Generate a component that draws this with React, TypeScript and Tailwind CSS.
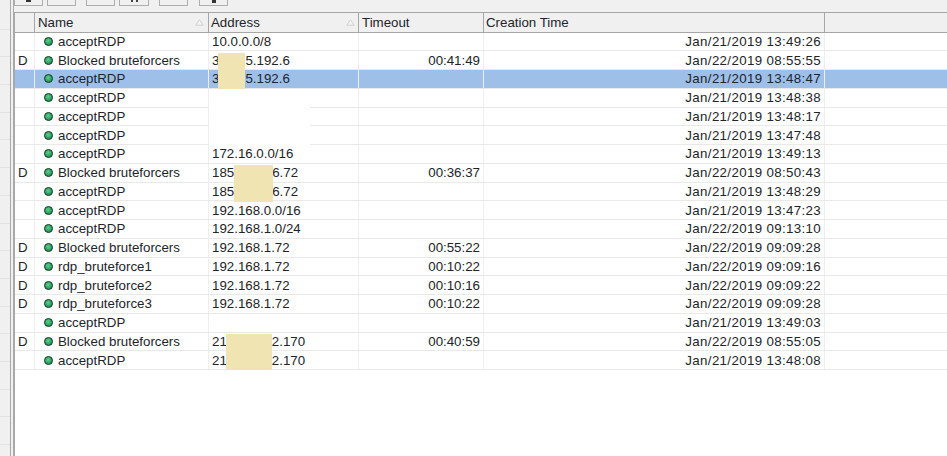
import React from 'react';

type Row = {
  flag?: string;
  name: string;
  addr?: string;
  tail?: string;
  gap?: number;
  timeout?: string;
  created: string;
  selected?: boolean;
};

const rows: Row[] = [
  { name: 'acceptRDP', addr: '10.0.0.0/8', created: 'Jan/21/2019 13:49:26' },
  { flag: 'D', name: 'Blocked bruteforcers', addr: '3', tail: '5.192.6', gap: 26, timeout: '00:41:49', created: 'Jan/22/2019 08:55:55' },
  { name: 'acceptRDP', addr: '3', tail: '5.192.6', gap: 26, created: 'Jan/21/2019 13:48:47', selected: true },
  { name: 'acceptRDP', created: 'Jan/21/2019 13:48:38' },
  { name: 'acceptRDP', created: 'Jan/21/2019 13:48:17' },
  { name: 'acceptRDP', created: 'Jan/21/2019 13:47:48' },
  { name: 'acceptRDP', addr: '172.16.0.0/16', created: 'Jan/21/2019 13:49:13' },
  { flag: 'D', name: 'Blocked bruteforcers', addr: '185', tail: '6.72', gap: 38, timeout: '00:36:37', created: 'Jan/22/2019 08:50:43' },
  { name: 'acceptRDP', addr: '185', tail: '6.72', gap: 38, created: 'Jan/21/2019 13:48:29' },
  { name: 'acceptRDP', addr: '192.168.0.0/16', created: 'Jan/21/2019 13:47:23' },
  { name: 'acceptRDP', addr: '192.168.1.0/24', created: 'Jan/22/2019 09:13:10' },
  { flag: 'D', name: 'Blocked bruteforcers', addr: '192.168.1.72', timeout: '00:55:22', created: 'Jan/22/2019 09:09:28' },
  { flag: 'D', name: 'rdp_bruteforce1', addr: '192.168.1.72', timeout: '00:10:22', created: 'Jan/22/2019 09:09:16' },
  { flag: 'D', name: 'rdp_bruteforce2', addr: '192.168.1.72', timeout: '00:10:16', created: 'Jan/22/2019 09:09:22' },
  { flag: 'D', name: 'rdp_bruteforce3', addr: '192.168.1.72', timeout: '00:10:22', created: 'Jan/22/2019 09:09:28' },
  { name: 'acceptRDP', created: 'Jan/21/2019 13:49:03' },
  { flag: 'D', name: 'Blocked bruteforcers', addr: '21', tail: '2.170', gap: 45, timeout: '00:40:59', created: 'Jan/22/2019 08:55:05' },
  { name: 'acceptRDP', addr: '21', tail: '2.170', gap: 45, created: 'Jan/21/2019 13:48:08' },
];

const toolButtons = ['w-[29px]', 'w-[29px] ml-[4px]', 'w-[29px] ml-[10px]', 'w-[30px] ml-[4px]', 'w-[29px] ml-[10px]', 'w-[29px] ml-[11px]'];

function Dot() {
  return (
    <svg width="9" height="9" viewBox="0 0 9 9" className="shrink-0">
      <defs>
        <radialGradient id="dot" cx="45%" cy="40%" r="60%">
          <stop offset="0%" stopColor="#5fd08e" />
          <stop offset="100%" stopColor="#1b8a50" />
        </radialGradient>
      </defs>
      <circle cx="4.5" cy="4.5" r="4" fill="url(#dot)" stroke="#12402a" strokeWidth="1" />
    </svg>
  );
}

function SortMark() {
  return (
    <svg width="9" height="7" viewBox="0 0 9 7" className="shrink-0">
      <path d="M4.5 0.8 L8.2 6.2 L0.8 6.2 Z" fill="#f4f4f4" stroke="#cfcfcf" strokeWidth="1" />
    </svg>
  );
}

export default function App() {
  return (
    <div className="w-[947px] h-[456px] overflow-hidden flex bg-[#f0f0f0] text-[13.3px] text-[#22242a] font-['Liberation_Sans',Arial,sans-serif]">
      {/* Left edge with faint ruler ticks */}
      <div className="w-[10px] shrink-0 pt-[2px]">
        {Array.from({ length: 16 }).map((_, i) => (
          <div key={i} className="h-[27.7px] border-b border-[#e2e2e2]" />
        ))}
      </div>
      <div className="w-[4px] shrink-0 border-l border-r border-[#a9a9a9] bg-[#f0f0f0]" />

      <div className="flex-1 flex flex-col min-w-0">
        {/* Toolbar remains */}
        <div className="h-[11.5px] shrink-0 flex items-start">
          {toolButtons.map((w, i) => (
            <div key={i} className={`${w} h-[6px] border-l border-r border-b border-[#adadad] bg-[#f0f0f0] flex justify-center`}>
              {i === 0 && <div className="w-[5px] h-[2px] bg-[#333]" />}
              {i === 3 && <div className="w-[7px] h-[2px] border-l-2 border-r-2 border-[#444]" />}
              {i === 5 && <div className="w-[4px] h-[3px] bg-[#333]" />}
            </div>
          ))}
        </div>

        <div className="flex-1 flex flex-col relative border-l border-[#a9a9a9]">
          {/* Column header */}
          <div className="h-[21px] shrink-0 flex bg-[#f0f0f0] border-t border-b border-[#a6a6a6]">
            <div className="w-[20px] shrink-0 border-r border-[#a6a6a6]" />
            <div className="w-[174px] shrink-0 border-r border-[#a6a6a6] pl-[3px] pr-[4px] flex items-center justify-between">
              <span className="pt-px">Name</span>
              <SortMark />
            </div>
            <div className="w-[150px] shrink-0 border-r border-[#a6a6a6] pl-[2px] pr-[3px] flex items-center justify-between">
              <span className="pt-px">Address</span>
              <SortMark />
            </div>
            <div className="w-[125px] shrink-0 border-r border-[#a6a6a6] pl-[3px] pt-px flex items-center">Timeout</div>
            <div className="w-[341px] shrink-0 border-r border-[#a6a6a6] pl-[2px] pt-px flex items-center">Creation Time</div>
          </div>

          {/* Rows */}
          <div className="flex-1 bg-white">
            {rows.map((r, i) => (
              <div key={i} className={`h-[18.75px] flex border-b border-[#e9e9e9] ${r.selected ? 'bg-[#9dbfe8]' : ''}`}>
                <div className="w-[20px] shrink-0 border-r border-[#eeeeee] pl-[3px] pt-px flex items-center">{r.flag}</div>
                <div className="w-[174px] shrink-0 border-r border-[#eeeeee] pl-[9px] gap-[5px] flex items-center">
                  <Dot />
                  <span className="whitespace-nowrap pt-px">{r.name}</span>
                </div>
                <div className="w-[150px] shrink-0 border-r border-[#eeeeee] pl-[3px] pt-px flex items-center whitespace-nowrap">
                  <span>{r.addr}</span>
                  {r.gap ? <span className="inline-block" style={{ width: r.gap }} /> : null}
                  {r.tail ? <span>{r.tail}</span> : null}
                </div>
                <div className="w-[125px] shrink-0 border-r border-[#eeeeee] pr-[3px] pt-px flex items-center justify-end">{r.timeout}</div>
                <div className="w-[341px] shrink-0 border-r border-[#eeeeee] pr-[3px] pt-px flex items-center justify-end tracking-[0.35px]">{r.created}</div>
              </div>
            ))}
          </div>

          {/* Redaction patches painted over the address column */}
          <div className="absolute left-[203px] top-[41px] w-[27px] h-[36px] bg-[#f0e4b2]" />
          <div className="absolute left-[219px] top-[153px] w-[39px] h-[37px] bg-[#f0e4b2]" />
          <div className="absolute left-[211px] top-[322px] w-[46px] h-[36px] bg-[#f0e4b2]" />
          <div className="absolute left-[194px] top-[78px] w-[101px] h-[56px] bg-white" />
        </div>
      </div>
    </div>
  );
}
